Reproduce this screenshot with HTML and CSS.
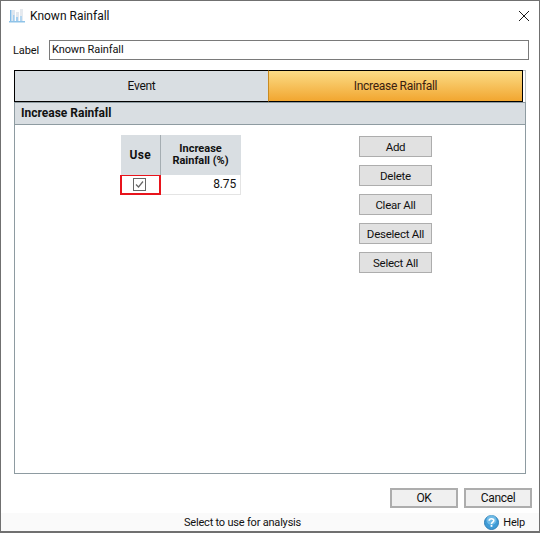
FILE: index.html
```html
<!DOCTYPE html>
<html lang="en">
<head>
    <meta charset="UTF-8">
    <title>Known Rainfall</title>
    <link rel="stylesheet" href="styles.css">
</head>
<body>
    <div class="dialog">
        <div class="title-bar">
            <svg class="app-icon" width="16" height="16" viewBox="0 0 16 16">
                <rect x="3" y="2" width="3" height="12" fill="#dfe6ee"/>
                <rect x="7" y="4" width="3" height="10" fill="#e3e8ee"/>
                <rect x="11" y="1" width="3" height="13" fill="#e6eaef"/>
                <rect x="1" y="2" width="1.5" height="12" fill="#86bde8"/>
                <rect x="4" y="7" width="1.5" height="7" fill="#a5cfef"/>
                <rect x="7" y="9" width="2" height="5" fill="#a5cfef"/>
                <rect x="11" y="8" width="2" height="6" fill="#b5d7f1"/>
                <rect x="0" y="13" width="16" height="1.5" fill="#8fc3e8"/>
            </svg>
            <span class="title-text">Known Rainfall</span>
            <svg class="close-icon" width="12" height="12" viewBox="0 0 12 12">
                <path d="M1 1 L11 11 M11 1 L1 11" stroke="#1a1a1a" stroke-width="1" fill="none"/>
            </svg>
        </div>

        <div class="label-row">
            <label class="label-text">Label</label>
            <div class="label-input">Known Rainfall</div>
        </div>

        <div class="main">
            <div class="tabs">
                <div class="tab">Event</div>
                <div class="tab tab-active">Increase Rainfall</div>
            </div>
            <div class="panel">
                <div class="panel-header">Increase Rainfall</div>
                <div class="panel-body">
                    <table class="grid">
                        <tr>
                            <th class="col-use">Use</th>
                            <th class="col-value">Increase<br>Rainfall (%)</th>
                        </tr>
                        <tr>
                            <td class="cell-use">
                                <svg class="check" width="13" height="13" viewBox="0 0 13 13">
                                    <rect x="0.5" y="0.5" width="12" height="12" fill="#fff" stroke="#666"/>
                                    <path d="M3 6.5 L5.5 9 L10 3.5" stroke="#666" stroke-width="1.2" fill="none"/>
                                </svg>
                            </td>
                            <td class="cell-value">8.75</td>
                        </tr>
                    </table>
                    <div class="side-buttons">
                        <button class="btn">Add</button>
                        <button class="btn">Delete</button>
                        <button class="btn">Clear All</button>
                        <button class="btn">Deselect All</button>
                        <button class="btn">Select All</button>
                    </div>
                </div>
            </div>
        </div>

        <div class="footer-buttons">
            <button class="btn-main">OK</button>
            <button class="btn-main">Cancel</button>
        </div>

        <div class="status-bar">
            <span class="status-text">Select to use for analysis</span>
            <span class="help">
                <svg width="15" height="15" viewBox="0 0 15 15">
                    <circle cx="7.5" cy="7.5" r="7" fill="#3f9bd6" stroke="#2f7fb5"/>
                    <circle cx="7.5" cy="5" r="5" fill="#8fd0f2" opacity="0.6"/>
                    <path d="M5.2 5.8 C5.2 3.2 9.8 3.2 9.8 5.6 C9.8 7.2 7.5 7.2 7.5 9" stroke="#fff" stroke-width="1.6" fill="none"/>
                    <rect x="6.6" y="10" width="1.8" height="1.8" fill="#fff"/>
                </svg>
                Help
            </span>
        </div>
    </div>
</body>
</html>
```

FILE: styles.css
```css
* {
    margin: 0;
    padding: 0;
    box-sizing: border-box;
}

body {
    font-family: Roboto, "Liberation Sans", Arial, sans-serif;
    font-size: 12px;
    letter-spacing: -0.15px;
    color: #111;
    background-color: #fff;
}

.dialog {
    width: 540px;
    height: 533px;
    background-color: #fff;
    border: 1px solid #707070;
    border-bottom-width: 2px;
    display: flex;
    flex-direction: column;
}

.title-bar {
    height: 29px;
    display: flex;
    align-items: center;
    padding-left: 8px;
    padding-right: 9px;
    flex-shrink: 0;
}

.app-icon {
    margin-right: 5px;
}

.title-text {
    flex: 1;
    letter-spacing: 0;
}

.label-row {
    display: flex;
    align-items: center;
    height: 20px;
    margin-top: 10px;
    padding-left: 12px;
    padding-right: 10px;
    font-size: 11px;
    letter-spacing: -0.1px;
}

.label-text {
    width: 36px;
}

.label-input {
    flex: 1;
    height: 20px;
    border: 1px solid #7a7a7a;
    padding-left: 2px;
    line-height: 18px;
}

.main {
    margin: 10px 13px 0 13px;
    height: 404px;
    display: flex;
    flex-direction: column;
}

.tabs {
    display: flex;
    height: 32px;
    padding-right: 2px;
    border-top: 1px solid #b9c0c4;
    border-right: 1px solid #b9c0c4;
    flex-shrink: 0;
}

.tab {
    width: 254px;
    display: flex;
    align-items: center;
    justify-content: center;
    margin-top: -1px;
    background-color: #d9dee2;
    border: 1px solid #000;
    border-right: 1px solid #c98a20;
    letter-spacing: -0.3px;
}

.tab:first-child {
    width: 255px;
}

.tab-active {
    background: linear-gradient(180deg, #fbdc86, #f2a630);
    border-right-color: #000;
    border-left: none;
    color: #3a2010;
}

.panel {
    flex: 1;
    border: 1px solid #8e9ba1;
    display: flex;
    flex-direction: column;
}

.panel-header {
    height: 22px;
    background-color: #d9dee2;
    border-bottom: 1px solid #8e9ba1;
    font-weight: bold;
    letter-spacing: 0;
    padding-left: 6px;
    line-height: 21px;
    flex-shrink: 0;
}

.panel-body {
    flex: 1;
    display: flex;
    align-items: flex-start;
    padding-top: 10px;
    padding-left: 105px;
}

.grid {
    border-collapse: collapse;
    width: 121px;
    table-layout: fixed;
}

.grid th {
    height: 40px;
    background-color: #d9dee2;
    font-size: 11px;
    font-weight: bold;
    letter-spacing: 0;
    line-height: 12px;
    text-align: center;
}

.grid .col-use {
    width: 39px;
    border-right: 1px solid #a5adb2;
    font-size: 12px;
    letter-spacing: 0.3px;
}

.cell-use {
    height: 19px;
    border: 2px solid #e8141c;
    border-top-width: 1px;
    text-align: center;
    line-height: 0;
    vertical-align: middle;
    padding-right: 3px;
}

.cell-value {
    text-align: right;
    padding-right: 4px;
    border-bottom: 1px solid #e4e4e4;
    border-right: 1px solid #e4e4e4;
}

.side-buttons {
    display: flex;
    flex-direction: column;
    gap: 8px;
    margin-left: 118px;
    margin-top: 1px;
}

.btn {
    width: 73px;
    height: 21px;
    font-family: inherit;
    font-size: 11.5px;
    letter-spacing: -0.25px;
    color: #111;
    background-color: #e1e1e1;
    border: 1px solid #adadad;
}

.footer-buttons {
    display: flex;
    justify-content: flex-end;
    gap: 6px;
    padding-right: 7px;
    margin-top: 14px;
}

.btn-main {
    width: 68px;
    height: 20px;
    font-family: inherit;
    font-size: 12px;
    letter-spacing: -0.35px;
    color: #111;
    background-color: #f0f0f0;
    border: 2px solid #adadad;
}

.status-bar {
    margin-top: 5px;
    flex: 1;
    background-color: #fafafa;
    position: relative;
    display: flex;
    align-items: center;
    justify-content: flex-end;
    padding-right: 14px;
    font-size: 11px;
    letter-spacing: -0.2px;
}

.status-text {
    position: absolute;
    left: 183px;
}

.help {
    display: flex;
    align-items: center;
    gap: 4px;
}
```
